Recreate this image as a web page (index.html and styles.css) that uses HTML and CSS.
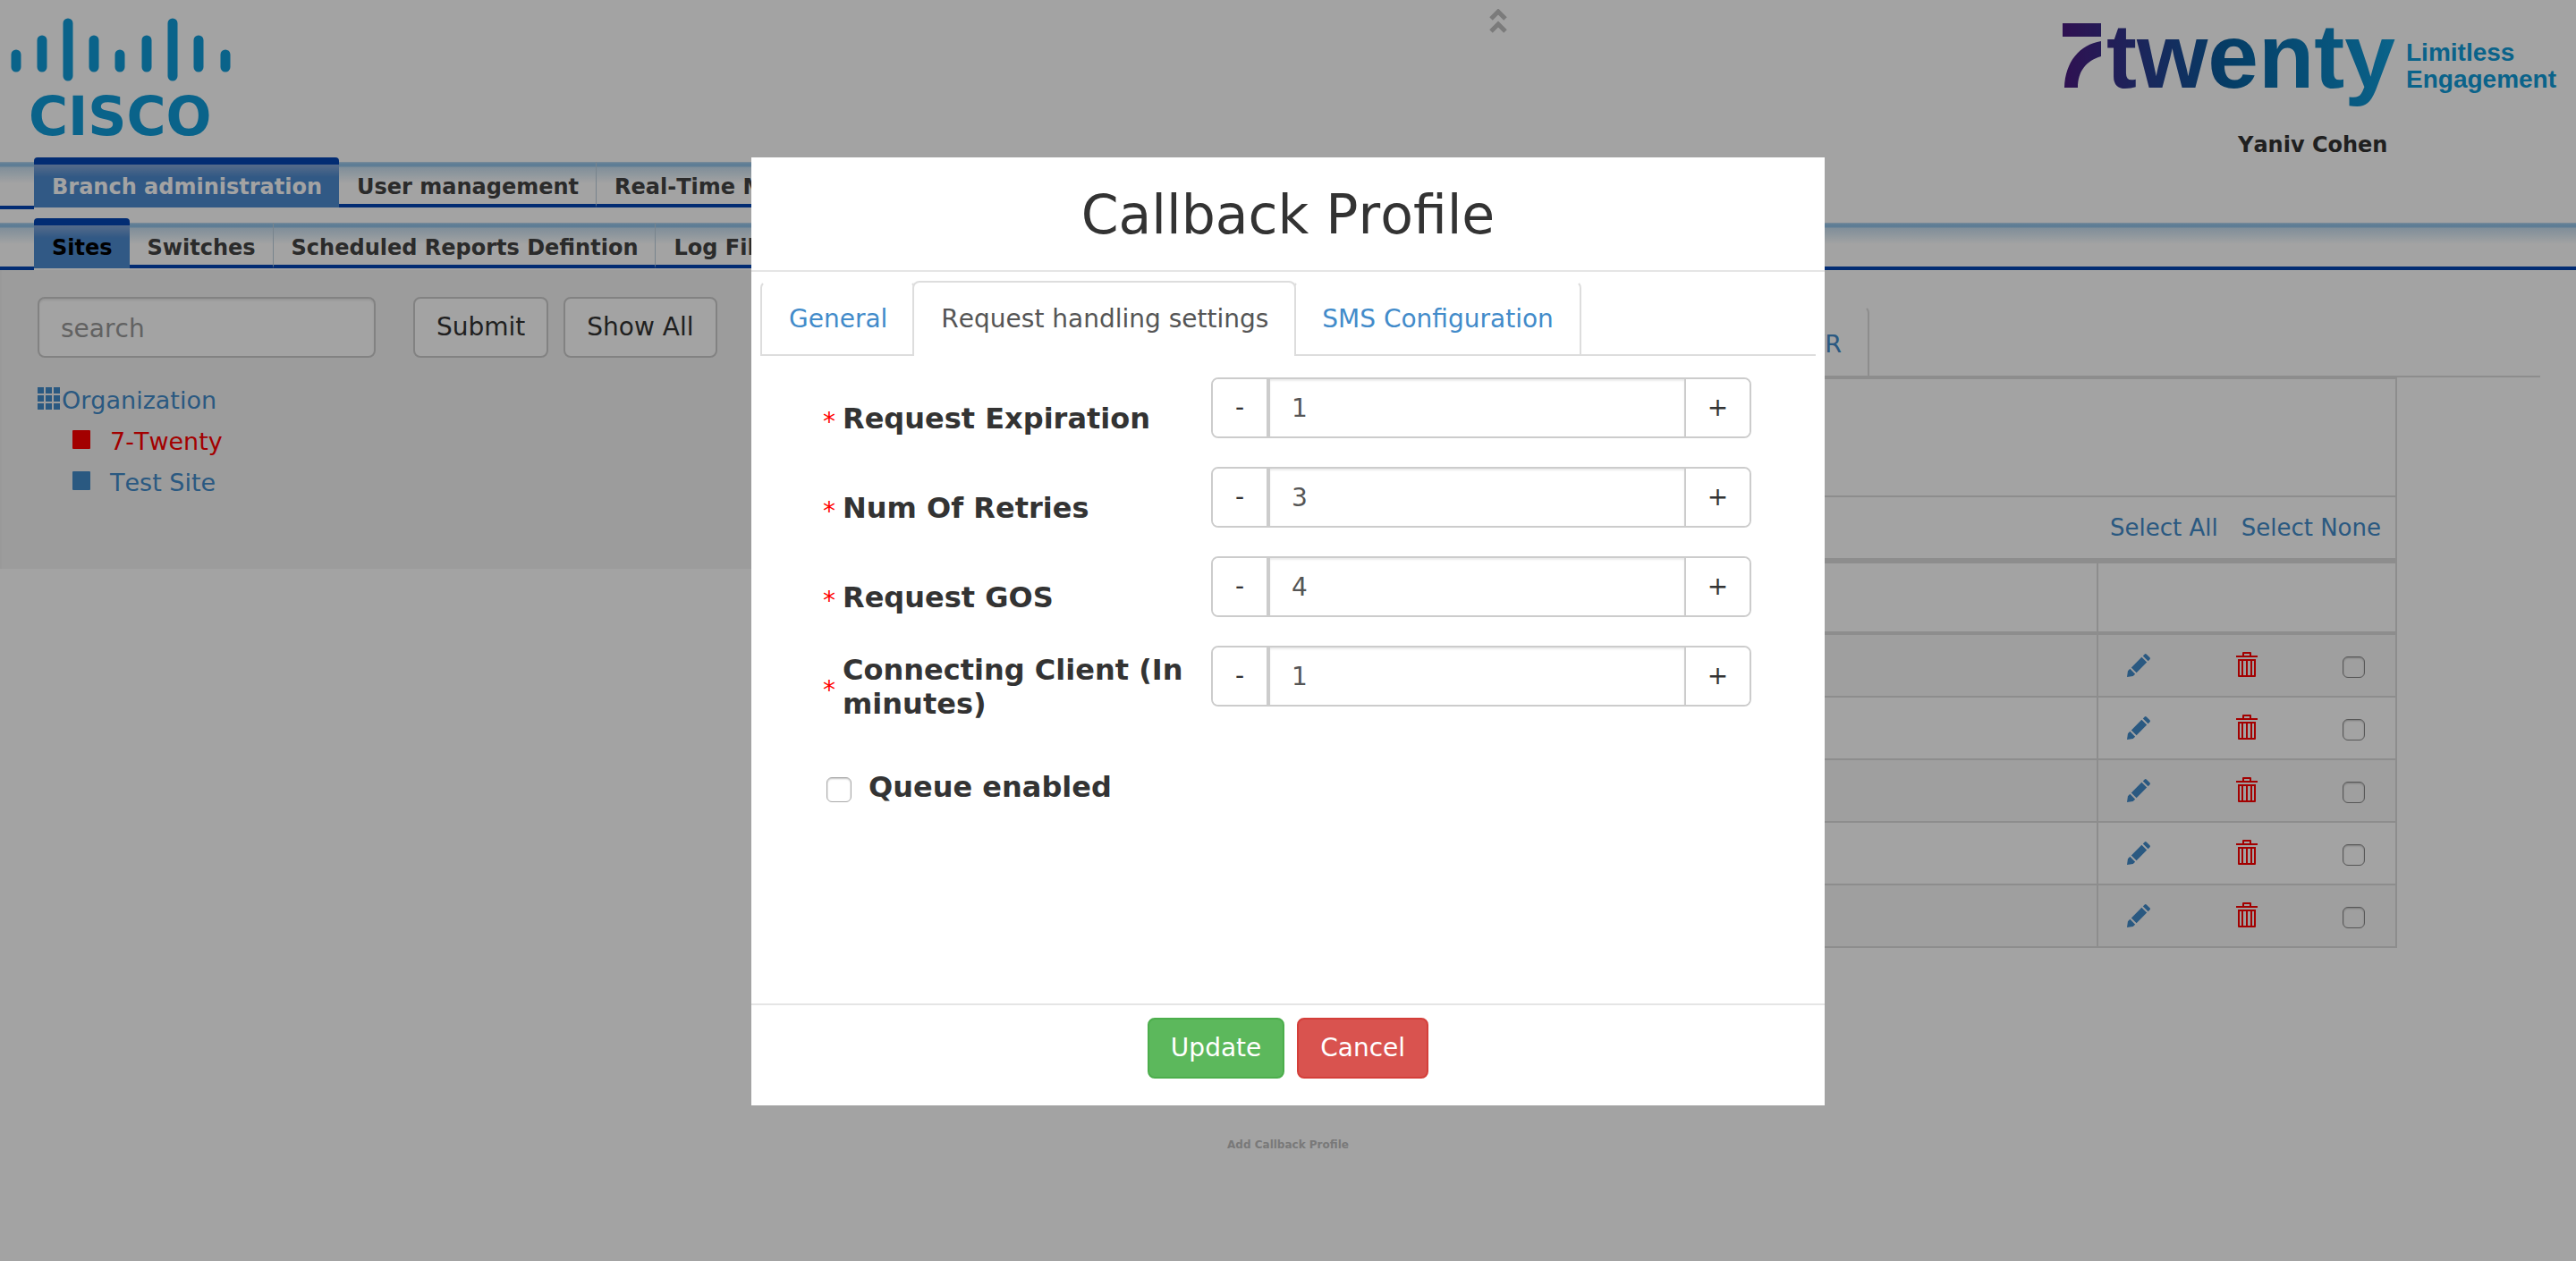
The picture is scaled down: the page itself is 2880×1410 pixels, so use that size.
FILE: index.html
```html
<!DOCTYPE html>
<html lang="en">
<head>
<meta charset="utf-8">
<title>Callback Profile</title>
<link rel="stylesheet" href="styles.css">
</head>
<body>
<svg class="sprite" aria-hidden="true">
  <symbol id="pencil" viewBox="0 0 28 28">
    <path d="M20.500 1.500Q21.500 .500 22.500 1.500L26.500 5.500Q27.500 6.500 26.500 7.500L24.500 9.500L18.500 3.500ZM17 5L23 11L11 23L5 17ZM3.500 18.500L9.500 24.500L7 27L0 28L1 21Z"/>
  </symbol>
  <symbol id="trash" viewBox="0 0 24 28">
    <path fill-rule="evenodd" d="M8 0H16Q17 0 17 1V4H24V6H0V4H7V1Q7 0 8 0ZM9 2V4H15V2ZM2 8H22V27Q22 28 21 28H3Q2 28 2 27ZM4 10V26H6V10ZM8 10V26H11V10ZM13 10V26H16V10ZM18 10V26H20V10Z"/>
  </symbol>
</svg>
<div class="page">
  <header class="header">
    <svg class="cisco" viewBox="0 0 270 164" role="img" aria-label="Cisco">
      <g class="cisco-bars">
        <path d="M18 61V75M47 45V75M76 26V85M105 45V75M134 61V75M164 45V75M193 26V85M222 45V75M252 61V75"/>
      </g>
      <text class="cisco-name" x="32" y="151">CISCO</text>
    </svg>
    <a class="collapse" href="#" aria-label="Collapse header">
      <svg viewBox="0 0 24 28"><path d="M4 11L12 3L20 11M4 25L12 17L20 25"/></svg>
    </a>
    <div class="brand">
      <svg class="brand-logo" viewBox="0 0 580 130" role="img" aria-label="7twenty Limitless Engagement">
        <defs>
          <linearGradient id="ink" gradientUnits="userSpaceOnUse" x1="6" y1="0" x2="376" y2="0">
            <stop offset="0" stop-color="#4a1a80"/><stop offset=".5" stop-color="#08609f"/><stop offset="1" stop-color="#109bd8"/>
          </linearGradient>
        </defs>
        <path fill="url(#ink)" d="M6 26H49V41H6ZM49 46V63C32 68 23 80 23 98H8C9 69 25 50 49 46Z"/>
        <text class="brand-name" x="55" y="98" fill="url(#ink)">twenty</text>
        <text class="brand-tag" x="390" y="68">Limitless</text>
        <text class="brand-tag" x="390" y="98">Engagement</text>
      </svg>
      <strong class="user">Yaniv Cohen</strong>
    </div>
  </header>

  <nav class="bar" aria-label="Sections">
    <ul class="tabs">
      <li><a class="tab current" href="#">Branch administration</a></li>
      <li><a class="tab" href="#">User management</a></li>
      <li><a class="tab" href="#">Real-Time Monitoring</a></li>
    </ul>
  </nav>
  <nav class="bar full" aria-label="Branch administration">
    <ul class="tabs">
      <li><a class="tab current dark" href="#">Sites</a></li>
      <li><a class="tab" href="#">Switches</a></li>
      <li><a class="tab" href="#">Scheduled Reports Defintion</a></li>
      <li><a class="tab" href="#">Log Files</a></li>
    </ul>
  </nav>

  <main class="content">
    <aside class="sidebar">
      <form class="search">
        <input class="field" type="text" placeholder="search" aria-label="search">
        <button class="btn" type="button">Submit</button>
        <button class="btn" type="button">Show All</button>
      </form>
      <div class="tree">
        <a class="root" href="#"><svg viewBox="0 0 25 25"><path d="M0 0h7v7H0zM9 0h7v7H9zM18 0h7v7h-7zM0 9h7v7H0zM9 9h7v7H9zM18 9h7v7h-7zM0 18h7v7H0zM9 18h7v7H9zM18 18h7v7h-7z"/></svg>Organization</a>
        <a class="site chosen" href="#">7-Twenty</a>
        <a class="site" href="#">Test Site</a>
      </div>
    </aside>
    <section class="panel">
      <ul class="nav-tabs panel-tabs"><li><a href="#">IVR</a></li></ul>
      <table class="grid">
        <colgroup><col><col class="actions-col"></colgroup>
        <thead>
          <tr class="row-title"><td colspan="2"></td></tr>
          <tr class="row-select"><td colspan="2"><div class="select"><a href="#">Select All</a><a href="#">Select None</a></div></td></tr>
          <tr class="row-head"><th></th><th></th></tr>
        </thead>
        <tbody>
          <tr><td></td><td><div class="actions"><a href="#" aria-label="Edit"><svg class="pencil"><use href="#pencil"/></svg></a><a class="red" href="#" aria-label="Delete"><svg class="trash"><use href="#trash"/></svg></a><input class="check small" type="checkbox" aria-label="Select row"></div></td></tr>
          <tr><td></td><td><div class="actions"><a href="#" aria-label="Edit"><svg class="pencil"><use href="#pencil"/></svg></a><a class="red" href="#" aria-label="Delete"><svg class="trash"><use href="#trash"/></svg></a><input class="check small" type="checkbox" aria-label="Select row"></div></td></tr>
          <tr><td></td><td><div class="actions"><a href="#" aria-label="Edit"><svg class="pencil"><use href="#pencil"/></svg></a><a class="red" href="#" aria-label="Delete"><svg class="trash"><use href="#trash"/></svg></a><input class="check small" type="checkbox" aria-label="Select row"></div></td></tr>
          <tr><td></td><td><div class="actions"><a href="#" aria-label="Edit"><svg class="pencil"><use href="#pencil"/></svg></a><a class="red" href="#" aria-label="Delete"><svg class="trash"><use href="#trash"/></svg></a><input class="check small" type="checkbox" aria-label="Select row"></div></td></tr>
          <tr><td></td><td><div class="actions"><a href="#" aria-label="Edit"><svg class="pencil"><use href="#pencil"/></svg></a><a class="red" href="#" aria-label="Delete"><svg class="trash"><use href="#trash"/></svg></a><input class="check small" type="checkbox" aria-label="Select row"></div></td></tr>
        </tbody>
      </table>
    </section>
  </main>
  <footer class="footnote">Add Callback Profile</footer>
</div>

<div class="overlay">
  <div class="dialog" role="dialog" aria-modal="true" aria-labelledby="dialog-title">
    <h1 class="dialog-title" id="dialog-title">Callback Profile</h1>
    <div class="dialog-body">
      <ul class="nav-tabs">
        <li><a href="#">General</a></li>
        <li><a class="active" href="#">Request handling settings</a></li>
        <li><a href="#">SMS Configuration</a></li>
      </ul>
      <form class="form">
        <div class="row">
          <label for="expiration"><span class="star">*</span><span>Request Expiration</span></label>
          <div class="stepper"><button type="button">-</button><input id="expiration" type="text" value="1"><button type="button">+</button></div>
        </div>
        <div class="row">
          <label for="retries"><span class="star">*</span><span>Num Of Retries</span></label>
          <div class="stepper"><button type="button">-</button><input id="retries" type="text" value="3"><button type="button">+</button></div>
        </div>
        <div class="row">
          <label for="gos"><span class="star">*</span><span>Request GOS</span></label>
          <div class="stepper"><button type="button">-</button><input id="gos" type="text" value="4"><button type="button">+</button></div>
        </div>
        <div class="row">
          <label for="connecting"><span class="star">*</span><span>Connecting Client (In minutes)</span></label>
          <div class="stepper"><button type="button">-</button><input id="connecting" type="text" value="1"><button type="button">+</button></div>
        </div>
        <div class="queue">
          <input class="check" id="queue" type="checkbox">
          <label for="queue">Queue enabled</label>
        </div>
      </form>
    </div>
    <div class="dialog-foot">
      <button class="btn green" type="button">Update</button>
      <button class="btn danger" type="button">Cancel</button>
    </div>
  </div>
</div>
</body>
</html>
```
FILE: styles.css
```css
*, *::before, *::after { box-sizing: border-box; }

body {
  margin: 0;
  background: #fff;
  color: #333;
  font: 28px/40px Verdana, "DejaVu Sans", sans-serif;
  font-kerning: none;
}

a { color: #428bca; text-decoration: none; }
ul { list-style: none; margin: 0; padding: 0; }
button, input { font: inherit; }
svg { display: block; }
.sprite { display: none; }

.page { min-height: 100vh; }

/* header */
.header {
  display: grid;
  grid-template-columns: 57.75% 24px 1fr;
  height: 176px;
}
.cisco { width: 270px; height: 164px; }
.cisco-bars { fill: none; stroke: #109bd8; stroke-width: 11; stroke-linecap: round; }
.cisco-name { fill: #109bd8; font: bold 60px "DejaVu Sans", sans-serif; }
.collapse { padding-top: 10px; }
.collapse svg { width: 24px; height: 28px; fill: none; stroke: #c0c0c0; stroke-width: 5; }
.brand { justify-self: end; width: 580px; }
.brand-logo { width: 580px; height: 130px; }
.brand-name { font: bold 102px "Liberation Sans", sans-serif; }
.brand-tag { fill: #109bd8; font: bold 28px "Liberation Sans", sans-serif; }
.user { display: block; padding: 16px 0 0 202px; font-size: 24px; line-height: 32px; }

/* section bars */
.bar {
  display: flex;
  align-items: flex-start;
  height: 58px;
  margin-bottom: 10px;
}
.bar.full { margin-bottom: 0; }
.bar::before, .bar.full::after {
  content: "";
  flex: 0 0 38px;
  height: 53px;
  margin-top: 5px;
  border-bottom: 4px solid #0446b4;
  background: linear-gradient(#c3dcf0 0, #94c4ea 2px, #94c4ea 5px, #c8dff0 6px, #fff 24px);
}
.bar.full::after { flex: 1; }
.tabs { display: flex; font-size: 24px; font-weight: bold; }
.tab {
  display: block;
  height: 51px;
  margin-top: 5px;
  padding: 12px 19px 0 20px;
  border-right: 1px solid #bccfdd;
  border-bottom: 4px solid #0446b4;
  background: linear-gradient(#c3dcf0 0, #94c4ea 2px, #94c4ea 5px, #c8dff0 6px, #fff 24px);
  color: #444;
  line-height: 32px;
}
.tab.current {
  height: 56px;
  margin-top: 0;
  padding-top: 17px;
  border: 0;
  border-radius: 4px 4px 0 0;
  background: linear-gradient(#0446b4 8px, #86a8d8 8px, #4e8bd0 22px);
  color: #fff;
}
.tab.dark { color: #000; }

/* content */
.content { display: flex; align-items: flex-start; }
.sidebar {
  flex: 0 0 30%;
  min-height: 334px;
  padding: 30px 0 0 40px;
  border-left: 2px solid #f0f0f0;
  background: #f5f5f5;
}
.search { display: flex; gap: 17px; }
.field {
  width: 378px;
  height: 68px;
  margin-right: 25px;
  padding: 3px 24px 0;
  border: 2px solid #ccc;
  border-radius: 8px;
  background: #fff;
  box-shadow: inset 0 2px 2px rgba(0, 0, 0, .08);
}
.field::placeholder { color: #999; opacity: 1; }
.btn {
  height: 68px;
  padding: 0 24px;
  border: 2px solid #ccc;
  border-radius: 8px;
  background: #fff;
  color: #333;
}
.tree { display: flex; flex-direction: column; margin-top: 25px; font-size: 27px; line-height: 46px; }
.root { display: flex; gap: 2px; }
.root svg { width: 25px; height: 25px; margin-top: 8px; fill: currentColor; }
.site { display: flex; gap: 22px; padding-left: 39px; }
.site::before { content: ""; width: 20px; height: 21px; margin-top: 10px; border-radius: 1px; background: currentColor; }
.chosen, .red { color: #f00; }

.panel { flex: 1; padding: 40px 40px 0 30px; }
.nav-tabs { display: flex; border-bottom: 2px solid #ddd; }
.nav-tabs li { margin-bottom: -2px; }
.nav-tabs li + li { margin-left: -3px; }
.nav-tabs a {
  display: block;
  height: 82px;
  padding: 21px 29px 0 30px;
  border: solid transparent;
  border-width: 2px 2px 0;
  border-left-color: #ddd;
  border-right-color: #ddd;
  border-radius: 8px 8px 0 0;
}
.nav-tabs .active {
  position: relative;
  height: 84px;
  border-color: #ddd;
  background: #fff;
  color: #555;
}
.panel-tabs { justify-content: flex-end; padding-right: 750px; font-size: 27px; }
.panel-tabs a { height: 80px; }

.grid {
  width: calc(100% - 160px);
  border: 2px solid #ddd;
  border-spacing: 0;
  table-layout: fixed;
}
.actions-col { width: 334px; }
.grid td, .grid th { padding: 0; border-bottom: 2px solid #ddd; }
.grid tr > :nth-child(2) { border-left: 2px solid #ddd; }
.grid tbody tr:last-child td { border-bottom: 0; }
.grid tbody tr:nth-child(odd) { background: #f9f9f9; }
.row-title td { height: 132px; }
.grid .row-select td { height: 74px; border-bottom-width: 6px; }
.grid .row-head th { height: 80px; border-bottom-width: 4px; }
.select { display: flex; justify-content: flex-end; gap: 26px; padding-right: 16px; font-size: 26px; }
.actions {
  display: flex;
  align-items: center;
  justify-content: space-between;
  height: 68px;
  padding: 0 34px 2px 32px;
}
.pencil { width: 27px; height: 27px; fill: currentColor; }
.trash { width: 24px; height: 28px; fill: currentColor; }
.check {
  flex: none;
  appearance: none;
  width: 28px;
  height: 28px;
  margin: 0;
  border: 1px solid #aaa;
  border-radius: 6px;
  background: #fff;
  box-shadow: inset 0 1px 2px rgba(0, 0, 0, .25);
}
.check.small { width: 25px; height: 24px; margin-top: 6px; border-color: #888; background: transparent; }

.footnote {
  margin-top: 208px;
  color: #bebebe;
  font-size: 12px;
  font-weight: bold;
  line-height: 24px;
  text-align: center;
}

/* dialog */
.overlay {
  position: fixed;
  inset: 0;
  padding: 176px 16px 16px;
  overflow: auto;
  background: rgba(0, 0, 0, .36);
}
.dialog { max-width: 1200px; margin: 0 auto; background: #fff; }
.dialog-title {
  margin: 0;
  padding: 32px 0 30px;
  border-bottom: 2px solid #e5e5e5;
  font-size: 60px;
  font-weight: normal;
  line-height: 64px;
  text-align: center;
}
.dialog-body { min-height: 818px; padding: 10px; }
.form { padding: 24px 72px 0 70px; }
.row { display: grid; grid-template-columns: 434px 1fr; height: 100px; }
.row label {
  display: flex;
  align-items: center;
  gap: 8px;
  height: 92px;
  font-size: 32px;
  font-weight: bold;
  line-height: 38px;
}
.star { padding-top: 8px; color: #f00; font-size: 28px; font-weight: normal; line-height: 28px; }
.stepper {
  display: flex;
  height: 68px;
  overflow: hidden;
  border: 2px solid #ccc;
  border-radius: 8px;
}
.stepper button { width: 60px; padding: 0; border: 0; background: #fff; color: #333; }
.stepper button:last-child { width: 71px; }
.stepper input {
  flex: 1;
  min-width: 0;
  padding: 2px 24px 0;
  border: solid #ccc;
  border-width: 0 2px 0 4px;
  color: #555;
  box-shadow: inset 0 2px 2px rgba(0, 0, 0, .08);
}
.queue { display: flex; align-items: center; gap: 19px; padding: 38px 0 0 4px; font-size: 32px; font-weight: bold; }
.queue .check { margin-top: 6px; }
.dialog-foot {
  display: flex;
  justify-content: center;
  gap: 14px;
  padding: 14px 0 30px;
  border-top: 2px solid #e5e5e5;
}
.green { border-color: #4cae4c; background: #5cb85c; color: #fff; }
.danger { border-color: #d43f3a; background: #d9534f; color: #fff; }
```
